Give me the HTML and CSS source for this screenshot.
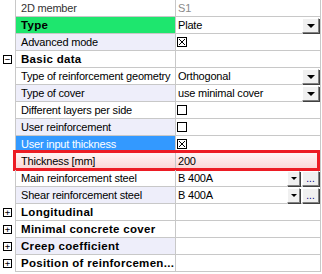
FILE: index.html
```html
<!DOCTYPE html>
<html lang="en">
<head>
    <meta charset="UTF-8">
    <title>Properties</title>
    <link rel="stylesheet" href="styles.css">
</head>
<body>
    <div class="prop-grid">
        <div class="row">
            <div class="gutter"></div>
            <div class="label muted">2D member</div>
            <div class="value"><span class="text grey">S1</span></div>
        </div>
        <div class="row">
            <div class="gutter"></div>
            <div class="label bold green">Type</div>
            <div class="value"><span class="text">Plate</span><span class="btn-drop"><i class="arrow"></i></span></div>
        </div>
        <div class="row">
            <div class="gutter"></div>
            <div class="label alt">Advanced mode</div>
            <div class="value"><span class="check checked"></span></div>
        </div>
        <div class="row">
            <div class="gutter"><span class="toggle">&minus;</span></div>
            <div class="label bold">Basic data</div>
            <div class="value"></div>
        </div>
        <div class="row">
            <div class="gutter"></div>
            <div class="label">Type of reinforcement geometry</div>
            <div class="value"><span class="text">Orthogonal</span><span class="btn-drop"><i class="arrow"></i></span></div>
        </div>
        <div class="row">
            <div class="gutter"></div>
            <div class="label alt">Type of cover</div>
            <div class="value"><span class="text">use minimal cover</span><span class="btn-drop"><i class="arrow"></i></span></div>
        </div>
        <div class="row">
            <div class="gutter"></div>
            <div class="label">Different layers per side</div>
            <div class="value"><span class="check"></span></div>
        </div>
        <div class="row">
            <div class="gutter"></div>
            <div class="label alt">User reinforcement</div>
            <div class="value"><span class="check"></span></div>
        </div>
        <div class="row">
            <div class="gutter"></div>
            <div class="label selected">User input thickness</div>
            <div class="value"><span class="check checked"></span></div>
        </div>
        <div class="row invalid">
            <div class="gutter"></div>
            <div class="label">Thickness [mm]</div>
            <div class="value"><span class="text">200</span></div>
        </div>
        <div class="row">
            <div class="gutter"></div>
            <div class="label">Main reinforcement steel</div>
            <div class="value"><span class="text">B 400A</span><span class="btn-drop small"><i class="arrow"></i></span><span class="btn-more">...</span></div>
        </div>
        <div class="row">
            <div class="gutter"></div>
            <div class="label alt">Shear reinforcement steel</div>
            <div class="value"><span class="text">B 400A</span><span class="btn-drop small"><i class="arrow"></i></span><span class="btn-more">...</span></div>
        </div>
        <div class="row">
            <div class="gutter"><span class="toggle">+</span></div>
            <div class="label bold">Longitudinal</div>
            <div class="value"></div>
        </div>
        <div class="row">
            <div class="gutter"><span class="toggle">+</span></div>
            <div class="label bold">Minimal concrete cover</div>
            <div class="value"></div>
        </div>
        <div class="row">
            <div class="gutter"><span class="toggle">+</span></div>
            <div class="label bold alt">Creep coefficient</div>
            <div class="value"></div>
        </div>
        <div class="row">
            <div class="gutter"><span class="toggle">+</span></div>
            <div class="label bold">Position of reinforcemen...</div>
            <div class="value"></div>
        </div>
    </div>
</body>
</html>
```

FILE: styles.css
```css
body {
    margin: 0;
    background-color: #ffffff;
    font-family: "Liberation Sans", Arial, sans-serif;
    font-size: 11px;
    letter-spacing: -0.2px;
    color: #000000;
}

.prop-grid {
    width: 322px;
}

    .prop-grid .row {
        position: relative;
        display: flex;
        height: 17px;
    }

    .prop-grid .gutter {
        width: 15px;
        flex: none;
        display: flex;
        align-items: center;
        justify-content: center;
    }

    .prop-grid .label {
        width: 154px;
        flex: none;
        padding-left: 5px;
        border-left: 1px solid #c8c8c8;
        border-bottom: 1px solid #c8c8c8;
        line-height: 16px;
        white-space: nowrap;
        overflow: hidden;
    }

    .prop-grid .value {
        width: 144px;
        flex: none;
        display: flex;
        align-items: center;
        border-left: 1px solid #c8c8c8;
        border-right: 1px solid #c8c8c8;
        border-bottom: 1px solid #c8c8c8;
    }

.label.bold {
    font-size: 11.5px;
    font-weight: bold;
    letter-spacing: 0.3px;
}

.label.muted {
    color: #333333;
}

.label.alt {
    background-color: #eeeefa;
}

.label.green {
    background-color: #1ee66e;
}

.label.selected {
    background-color: #3399ff;
    color: #ffffff;
}

.value .text {
    flex: 1;
    padding-left: 2px;
    line-height: 16px;
    white-space: nowrap;
}

.value .grey {
    color: #8a8a8a;
}

/* combo box arrow button */
.btn-drop {
    width: 15px;
    height: 13px;
    margin-right: 1px;
    display: flex;
    align-items: center;
    justify-content: center;
    background-color: #f0f0f0;
    border-top: 1px solid #ffffff;
    border-left: 1px solid #ffffff;
    border-right: 1px solid #808080;
    border-bottom: 1px solid #808080;
    box-shadow: 1px 1px 0 #404040;
}

    .btn-drop.small {
        width: 11px;
        margin-right: 2px;
    }

    .btn-drop .arrow {
        width: 0;
        height: 0;
        border-left: 4px solid transparent;
        border-right: 4px solid transparent;
        border-top: 4px solid #000000;
        margin-top: 1px;
    }

    .btn-drop.small .arrow {
        border-left-width: 3px;
        border-right-width: 3px;
        border-top-width: 3px;
    }

.btn-more {
    width: 15px;
    height: 13px;
    margin-right: 1px;
    background-color: #f0f0f0;
    border-top: 1px solid #ffffff;
    border-left: 1px solid #ffffff;
    border-right: 1px solid #808080;
    border-bottom: 1px solid #808080;
    box-shadow: 1px 1px 0 #404040;
    font-size: 10px;
    letter-spacing: 0;
    line-height: 14px;
    text-align: center;
    color: #000080;
}

/* checkbox */
.check {
    width: 8px;
    height: 8px;
    margin-left: 1px;
    border: 1px solid #000000;
    background-color: #ffffff;
}

    .check.checked {
        background:
            linear-gradient(45deg, transparent 45%, #000000 45%, #000000 55%, transparent 55%),
            linear-gradient(-45deg, transparent 45%, #000000 45%, #000000 55%, transparent 55%),
            #ffffff;
        background-size: 6px 6px;
        background-position: 1px 1px;
        background-repeat: no-repeat;
    }

/* expand / collapse box */
.toggle {
    width: 7px;
    height: 7px;
    border: 1px solid #000000;
    font-size: 9px;
    letter-spacing: 0;
    line-height: 7px;
    text-align: center;
    font-family: "DejaVu Sans Mono", monospace;
}

/* invalid input */
.row.invalid .label,
.row.invalid .value {
    background: linear-gradient(to bottom, #fff4f4, #fbd6d6);
}

.row.invalid::after {
    content: "";
    position: absolute;
    left: 13px;
    top: -3px;
    width: 301px;
    height: 15px;
    border: 3px solid #ec1c24;
    pointer-events: none;
}
```
